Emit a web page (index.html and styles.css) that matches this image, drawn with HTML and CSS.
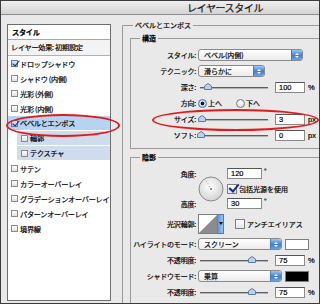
FILE: index.html
```html
<!DOCTYPE html>
<html>
<head>
    <meta charset="utf-8">
    <title>レイヤースタイル</title>
    <link rel="stylesheet" href="styles.css">
</head>
<body>
    <div class="window">
        <div class="titlebar">レイヤースタイル</div>
        <div class="main">
            <div class="styles">
                <div class="styles-head">スタイル</div>
                <div class="styles-preset">レイヤー効果: 初期設定</div>
                <ul class="effects">
                    <li><span class="check on"></span>ドロップシャドウ</li>
                    <li><span class="check"></span>シャドウ (内側)</li>
                    <li><span class="check"></span>光彩 (外側)</li>
                    <li><span class="check"></span>光彩 (内側)</li>
                    <li class="selected"><span class="check on"></span>ベベルとエンボス</li>
                    <li class="sub"><span class="check"></span>輪郭</li>
                    <li class="sub"><span class="check"></span>テクスチャ</li>
                    <li><span class="check"></span>サテン</li>
                    <li><span class="check"></span>カラーオーバーレイ</li>
                    <li><span class="check"></span>グラデーションオーバーレイ</li>
                    <li><span class="check"></span>パターンオーバーレイ</li>
                    <li><span class="check"></span>境界線</li>
                </ul>
            </div>

            <fieldset class="group outer">
                <legend>ベベルとエンボス</legend>

                <fieldset class="group struct">
                    <legend>構造</legend>
                    <div class="row">
                        <label>スタイル:</label>
                        <div class="popup w-style"><span class="popup-text">ベベル(内側)</span><span class="stepper"></span></div>
                    </div>
                    <div class="row">
                        <label>テクニック:</label>
                        <div class="popup w-tech"><span class="popup-text">滑らかに</span><span class="stepper"></span></div>
                    </div>
                    <div class="row">
                        <label>深さ:</label>
                        <div class="slider"><svg class="thumb" style="margin-left: 4px" width="8" height="7" viewBox="0 0 8 7"><path d="M0.5 6.5V3L4 0.5L7.5 3V6.5Z" fill="#b9d1ee" stroke="#5b7ca6"/></svg></div>
                        <span class="field">100</span><span class="unit">%</span>
                    </div>
                    <div class="row">
                        <label>方向:</label>
                        <span class="radio on"></span><span class="radio-text">上へ</span>
                        <span class="radio"></span><span class="radio-text">下へ</span>
                    </div>
                    <div class="row">
                        <label>サイズ:</label>
                        <div class="slider"><svg class="thumb" style="margin-left: -2px" width="8" height="7" viewBox="0 0 8 7"><path d="M0.5 6.5V3L4 0.5L7.5 3V6.5Z" fill="#b9d1ee" stroke="#5b7ca6"/></svg></div>
                        <span class="field">3</span><span class="unit">px</span>
                    </div>
                    <div class="row">
                        <label>ソフト:</label>
                        <div class="slider"><svg class="thumb" style="margin-left: -3px" width="8" height="7" viewBox="0 0 8 7"><path d="M0.5 6.5V3L4 0.5L7.5 3V6.5Z" fill="#b9d1ee" stroke="#5b7ca6"/></svg></div>
                        <span class="field">0</span><span class="unit">px</span>
                    </div>
                </fieldset>

                <fieldset class="group shade">
                    <legend>陰影</legend>
                    <div class="angle">
                        <label class="r1">角度:</label>
                        <div class="dial">
                            <svg width="26" height="26" viewBox="0 0 26 26">
                                <defs>
                                    <radialGradient id="dialFill" cx="45%" cy="40%" r="65%">
                                        <stop offset="0" stop-color="#ffffff"/>
                                        <stop offset="1" stop-color="#cfcfcf"/>
                                    </radialGradient>
                                </defs>
                                <circle cx="13" cy="13" r="12" fill="url(#dialFill)" stroke="#8a8a8a"/>
                                <circle cx="13" cy="13" r="0.9" fill="#666"/>
                                <circle cx="11.5" cy="10.4" r="0.5" fill="#888"/>
                                <circle cx="10" cy="7.8" r="0.5" fill="#888"/>
                                <circle cx="8.5" cy="5.2" r="0.5" fill="#888"/>
                            </svg>
                        </div>
                        <div class="r1 ctl"><span class="field short">120</span><span class="deg">°</span></div>
                        <div class="r2 ctl"><span class="check big on"></span>包括光源を使用</div>
                        <label class="r3">高度:</label>
                        <div class="r3 ctl"><span class="field short">30</span><span class="deg">°</span></div>
                    </div>
                    <div class="row contour-row">
                        <label>光沢輪郭:</label>
                        <div class="contour">
                            <svg width="20" height="20" viewBox="0 0 20 20">
                                <rect x="0.5" y="0.5" width="19" height="19" fill="#fff" stroke="#7c7c7c"/>
                                <path d="M1 19L19 1V19Z" fill="#8c8c8c"/>
                            </svg>
                            <span class="contour-arrow"></span>
                        </div>
                        <span class="check big"></span>アンチエイリアス
                    </div>
                    <div class="row">
                        <label>ハイライトのモード:</label>
                        <div class="popup w-mode"><span class="popup-text">スクリーン</span><span class="stepper"></span></div>
                        <span class="swatch white"></span>
                    </div>
                    <div class="row">
                        <label>不透明度:</label>
                        <div class="slider"><svg class="thumb" style="margin-left: 48px" width="8" height="7" viewBox="0 0 8 7"><path d="M0.5 6.5V3L4 0.5L7.5 3V6.5Z" fill="#b9d1ee" stroke="#5b7ca6"/></svg></div>
                        <span class="field">75</span><span class="unit">%</span>
                    </div>
                    <div class="row">
                        <label>シャドウモード:</label>
                        <div class="popup w-mode"><span class="popup-text">乗算</span><span class="stepper"></span></div>
                        <span class="swatch black"></span>
                    </div>
                    <div class="row">
                        <label>不透明度:</label>
                        <div class="slider"><svg class="thumb" style="margin-left: 48px" width="8" height="7" viewBox="0 0 8 7"><path d="M0.5 6.5V3L4 0.5L7.5 3V6.5Z" fill="#b9d1ee" stroke="#5b7ca6"/></svg></div>
                        <span class="field">75</span><span class="unit">%</span>
                    </div>
                </fieldset>
            </fieldset>
        </div>

        <div class="mark mark-list"></div>
        <div class="mark mark-size"></div>
    </div>
</body>
</html>
```

FILE: styles.css
```css
* {
    box-sizing: border-box;
}

body {
    margin: 0;
    font-family: "Noto Sans CJK JP", "Noto Sans", sans-serif;
    font-size: 7px;
    color: #000;
    -webkit-text-stroke: 0.2px #000;
}

.window {
    position: relative;
    width: 320px;
    height: 304px;
    border: 1px solid #3c3c3c;
    background-color: #e9e9e9;
    overflow: hidden;
}

.titlebar {
    height: 14px;
    padding-left: 130px;
    display: flex;
    align-items: center;
    justify-content: center;
    font-size: 10px;
    letter-spacing: -0.4px;
    color: #1a1a1a;
    background: linear-gradient(#efefef, #d3d3d3);
    border-bottom: 1px solid #8e8e8e;
}

.main {
    display: flex;
    align-items: flex-start;
    padding: 6px 0 0 6px;
}

/* left list */

.styles {
    flex: none;
    width: 104px;
    height: 277px;
    margin-top: 3px;
    border: 1px solid #6e6e6e;
    background-color: #fff;
    font-size: 7.2px;
    letter-spacing: -0.3px;
}

.styles-head {
    height: 15px;
    line-height: 14px;
    padding-left: 4px;
    font-weight: bold;
    border-bottom: 1px solid #a8a8a8;
}

.styles-preset {
    height: 16px;
    line-height: 15px;
    padding-left: 3px;
    background-color: #f3f3f3;
    border-bottom: 1px solid #b2b2b2;
}

.effects {
    list-style: none;
    margin: 0;
    padding: 0;
}

.effects li {
    height: 15px;
    display: flex;
    align-items: center;
    padding-left: 3px;
    white-space: nowrap;
    overflow: hidden;
}

.effects .selected {
    background-color: #b6d3f1;
    border-bottom: 1px solid #fff;
}

.effects .sub {
    margin-left: 9px;
    padding-left: 4px;
    background-color: #cfdcee;
    border-bottom: 1px solid #fff;
}

.check {
    flex: none;
    width: 7px;
    height: 7px;
    margin-right: 2px;
    border: 1px solid #8c8c8c;
    background: linear-gradient(#fff, #dedede);
}

.check.on {
    background: linear-gradient(#dbe8f8, #a9c6ea);
    border-color: #5d7fae;
}

.check.on::after {
    content: "";
    display: block;
    width: 3px;
    height: 6px;
    margin: -2px 0 0 1.5px;
    border: solid #14306e;
    border-width: 0 1.5px 1.5px 0;
    transform: rotate(40deg);
}

.check.big {
    width: 10px;
    height: 10px;
    margin-right: 2px;
    background: linear-gradient(#fff, #e4e4e4);
    border-color: #808080;
}

.check.big.on::after {
    width: 4px;
    height: 8px;
    margin: -3px 0 0 3px;
    border-width: 0 2px 2px 0;
    border-color: #16307a;
}

/* right side */

.group {
    margin: 0;
    padding: 0;
    min-width: 0;
    border: 1px solid #9a9a9a;
}

.group legend {
    padding: 0 2px;
    line-height: 9px;
    font-size: 7px;
}

.outer {
    flex: none;
    width: 240px;
    height: 320px;
    margin-left: 11px;
    padding: 4px 0 0 7px;
}

.outer > legend {
    margin-left: 3px;
}

.struct,
.shade {
    width: 220px;
}

.struct legend,
.shade legend {
    margin-left: 9px;
    font-weight: bold;
}

.struct {
    padding: 4px 0 5px;
}

.shade {
    margin-top: 4px;
    padding: 4px 0 30px;
}

.row {
    display: flex;
    align-items: center;
    height: 16px;
    white-space: nowrap;
}

.row label,
.angle label {
    flex: none;
    width: 65px;
    margin-right: 2px;
    text-align: right;
    letter-spacing: -0.2px;
}

.popup {
    display: flex;
    height: 12px;
    border: 1px solid #8a8a8a;
    border-radius: 3px;
    background: linear-gradient(#fff, #ececec);
    overflow: hidden;
}

.w-style { width: 105px; }
.w-tech { width: 67px; }
.w-mode { width: 84px; }

.popup-text {
    flex: 1;
    padding-left: 5px;
    line-height: 10px;
}

.stepper {
    flex: none;
    width: 11px;
    display: flex;
    flex-direction: column;
    align-items: center;
    justify-content: center;
    gap: 1px;
    border-left: 1px solid #4f78b2;
    background: linear-gradient(#9cc6f2, #3f7fd8 55%, #6aa3ea);
}

.stepper::before {
    content: "";
    border-left: 2px solid transparent;
    border-right: 2px solid transparent;
    border-bottom: 2px solid #fff;
}

.stepper::after {
    content: "";
    border-left: 2px solid transparent;
    border-right: 2px solid transparent;
    border-top: 2px solid #fff;
}

.slider {
    flex: none;
    width: 68px;
    height: 7px;
    margin: 0 0 2px 2px;
    display: flex;
    align-items: flex-end;
    background:
        linear-gradient(#5e5e5e, #5e5e5e) 0 4px / 100% 1px no-repeat,
        linear-gradient(#b4b4b4, #b4b4b4) 0 5px / 100% 1px no-repeat;
}

.thumb {
    display: block;
    flex: none;
}

.field {
    flex: none;
    width: 30px;
    height: 11px;
    margin-left: 7px;
    padding-left: 3px;
    line-height: 9px;
    font-family: "Liberation Sans", Arial, sans-serif;
    font-size: 7.5px;
    background-color: #fff;
    border: 1px solid #8a8a8a;
    border-top-color: #555;
}

.field.short {
    width: 35px;
    margin-left: 0;
}

.unit {
    margin-left: 3px;
    font-family: "Liberation Sans", Arial, sans-serif;
    font-size: 7.5px;
}

.deg {
    align-self: flex-start;
    margin-left: 2px;
    font-size: 7px;
    line-height: 7px;
}

.radio {
    flex: none;
    width: 9px;
    height: 9px;
    margin-right: 1px;
    border-radius: 50%;
    border: 1px solid #7a7a7a;
    background: radial-gradient(circle at 50% 35%, #fff, #d6d6d6);
}

.radio.on {
    border-color: #4c73aa;
    background: radial-gradient(circle, #161616 0 1.5px, #d2e2f5 2.2px, #9cbfe8);
}

.radio-text {
    margin-right: 14px;
}

.angle {
    display: grid;
    grid-template-columns: 67px 29px auto;
    grid-template-rows: 15px 15px 15px;
    align-items: center;
}

.angle .r1 { grid-row: 1; }
.angle .r2 { grid-row: 2; grid-column: 3; }
.angle .r3 { grid-row: 3; }

.angle label {
    grid-column: 1;
}

.dial {
    grid-column: 2;
    grid-row: 1 / 4;
    display: flex;
}

.dial svg {
    display: block;
}

.ctl {
    grid-column: 3;
    display: flex;
    align-items: center;
    white-space: nowrap;
}

.contour-row {
    height: 25px;
}

.contour {
    display: flex;
    margin-right: 11px;
}

.contour svg {
    display: block;
}

.contour-arrow {
    width: 6px;
    height: 20px;
    display: flex;
    align-items: center;
    justify-content: center;
    background: linear-gradient(90deg, #5e98e4, #9cc6f2);
    border: 1px solid #5278ae;
    border-left: 0;
}

.contour-arrow::after {
    content: "";
    border-left: 2px solid transparent;
    border-right: 2px solid transparent;
    border-top: 3px solid #111;
}

.swatch {
    flex: none;
    width: 24px;
    height: 11px;
    margin-left: 3px;
    border: 1px solid #7d7d7d;
}

.swatch.white { background-color: #fff; }
.swatch.black { background-color: #000; }

/* red marks drawn over the screenshot */

.mark {
    position: absolute;
    border: 2px solid #e11b1b;
    border-radius: 50%;
}

.mark-list {
    left: 5px;
    top: 113px;
    width: 114px;
    height: 23px;
}

.mark-size {
    left: 151px;
    top: 108px;
    width: 167px;
    height: 22px;
}
```
